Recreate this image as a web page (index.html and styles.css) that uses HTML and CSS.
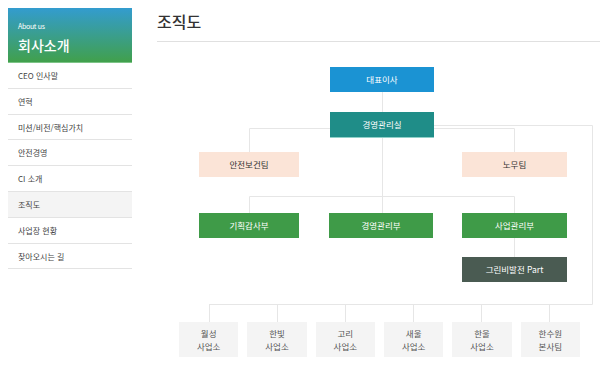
FILE: index.html
```html
<!DOCTYPE html>
<html lang="ko">
<head>
	<meta charset="utf-8">
	<meta name="viewport" content="width=device-width, initial-scale=1">
	<title>조직도</title>
	<link rel="stylesheet" href="styles.css">
</head>
<body>

	<div class="page">
		<aside class="side">
			<div class="side-head">
				<p class="side-sub">About us</p>
				<h2 class="side-title">회사소개</h2>
			</div>
			<ul class="side-menu">
				<li>CEO 인사말</li>
				<li>연혁</li>
				<li>미션/비전/핵심가치</li>
				<li>안전경영</li>
				<li>CI 소개</li>
				<li class="on">조직도</li>
				<li>사업장 현황</li>
				<li>찾아오시는 길</li>
			</ul>
		</aside>

		<main class="main">
			<h1 class="main-title">조직도</h1>

			<div class="chart">
				<!-- 연결선 -->
				<svg class="lines" width="443" height="300" viewBox="0 0 443 300">
					<g stroke="#e6e6e6" stroke-width="1" fill="none">
						<path d="M225.5 32 V153"/>
						<path d="M92.5 92 V68.5 H357.5 V92"/>
						<path d="M92.5 153 V136.5 H357.5 V153"/>
						<path d="M357.5 178 V197"/>
						<path d="M277 65.5 H435.5 V244.5 H52"/>
						<path d="M52.5 244 V262 M120.5 244 V262 M188.5 244 V262 M256.5 244 V262 M324.5 244 V262 M392.5 244 V262"/>
					</g>
				</svg>

				<div class="node blue" style="left:173px; top:7px; width:104px;">대표이사</div>
				<div class="node teal" style="left:173px; top:52px; width:104px;">경영관리실</div>
				<div class="node peach" style="left:42px; top:92px; width:100px;">안전보건팀</div>
				<div class="node peach" style="left:305px; top:92px; width:105px;">노무팀</div>
				<div class="node green" style="left:42px; top:153px; width:100px;">기획감사부</div>
				<div class="node green" style="left:172px; top:153px; width:104px;">경영관리부</div>
				<div class="node green" style="left:305px; top:153px; width:105px;">사업관리부</div>
				<div class="node dark" style="left:305px; top:197px; width:105px;">그린비발전 Part</div>

				<div class="sites">
					<div class="site">월성<br>사업소</div>
					<div class="site">한빛<br>사업소</div>
					<div class="site">고리<br>사업소</div>
					<div class="site">새울<br>사업소</div>
					<div class="site">한울<br>사업소</div>
					<div class="site">한수원<br>본사팀</div>
				</div>
			</div>
		</main>
	</div>

</body>
</html>
```

FILE: styles.css
```css
body {
	margin: 8px 0 0 8px;
	font-family: "Noto Sans CJK KR", "Noto Sans", sans-serif;
	color: #333;
	background: #fff;
}

.page {
	display: flex;
	gap: 25px;
}

.side {
	width: 124px;
	flex-shrink: 0;
}

.side-head {
	height: 55px;
	padding: 11px 10px 0;
	box-sizing: border-box;
	background: linear-gradient(to bottom, #339ccf, #41a04c);
	border-bottom: 1px solid #7cc487;
	color: #fff;
}

.side-sub {
	margin: 0;
	font-size: 7px;
	line-height: 14px;
	letter-spacing: -0.3px;
}

.side-title {
	margin: 2px 0 0;
	font-size: 14px;
	font-weight: 500;
	line-height: 20px;
}

.side-menu {
	list-style: none;
	margin: 0;
	padding: 0;
}

.side-menu li {
	height: 25.8px;
	line-height: 25px;
	padding-left: 10px;
	box-sizing: border-box;
	border-bottom: 1px solid #e3e3e3;
	font-size: 8px;
	color: #444;
}

.side-menu li.on {
	background: #f4f4f4;
}

.main {
	flex: 1;
}

.main-title {
	margin: 0;
	padding: 3px 0 0;
	height: 34px;
	box-sizing: border-box;
	border-bottom: 1px solid #e0e0e0;
	font-size: 16px;
	font-weight: 500;
	line-height: 20px;
	color: #333;
}

.chart {
	position: relative;
	height: 300px;
	margin-top: 18px;
}

.lines {
	position: absolute;
	left: 0;
	top: 0;
}

.node {
	position: absolute;
	height: 25px;
	line-height: 25px;
	text-align: center;
	font-size: 8.5px;
	color: #fff;
}

.blue { background: #1b93d3; }
.teal {
	height: 26px;
	background: #1f8d88;
	border-bottom: 1px solid #8fd0c8;
	box-sizing: border-box;
}
.peach { background: #fbe4d7; color: #333; }
.green { background: #3f9b48; }
.dark { background: #4a5b52; }

.sites {
	position: absolute;
	left: 22px;
	top: 262px;
	width: 401px;
	display: grid;
	grid-template-columns: repeat(6, 1fr);
	gap: 9px;
}

.site {
	height: 35px;
	padding-top: 5px;
	box-sizing: border-box;
	background: #f4f4f4;
	text-align: center;
	font-size: 8.5px;
	line-height: 12.5px;
	color: #555;
}
```
